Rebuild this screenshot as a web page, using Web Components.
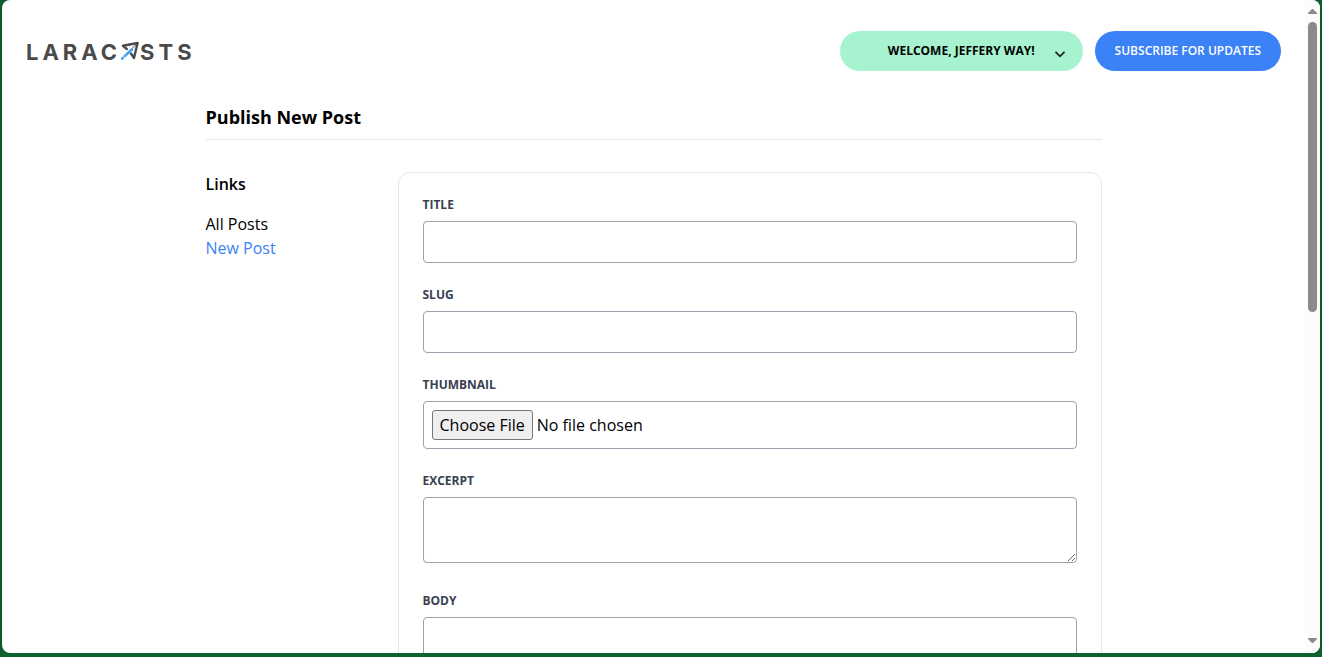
<!DOCTYPE html>
<html lang="en">
<head>
<meta charset="utf-8">
<title>Publish New Post</title>
<style>
  html { background: #0f6230; }
  body { margin: 0; font-family: "Open Sans", "Noto Sans", sans-serif; font-size: 16px; line-height: 24px; color: #000; }
</style>
</head>
<body>
<app-window>
  <site-header>
    <site-logo slot="logo"></site-logo>
    <user-menu>WELCOME, JEFFERY WAY!</user-menu>
    <pill-link href="#newsletter">SUBSCRIBE FOR UPDATES</pill-link>
  </site-header>
  <post-settings heading="Publish New Post">
    <side-nav slot="aside" heading="Links">
      <nav-item href="#posts">All Posts</nav-item>
      <nav-item href="#create" active>New Post</nav-item>
    </side-nav>
    <form-field name="title" label="TITLE" type="text"></form-field>
    <form-field name="slug" label="SLUG" type="text"></form-field>
    <form-field name="thumbnail" label="THUMBNAIL" type="file"></form-field>
    <form-field name="excerpt" label="EXCERPT" type="textarea"></form-field>
    <form-field name="body" label="BODY" type="textarea"></form-field>
  </post-settings>
</app-window>

<script>
const define = (name, render) => customElements.define(name, class extends HTMLElement {
  connectedCallback() {
    if (this.shadowRoot) return;
    const t = document.createElement('template');
    t.innerHTML = '<style>*{box-sizing:border-box}</style>' + render(this);
    this.attachShadow({ mode: 'open' }).append(t.content.cloneNode(true));
  }
});

define('app-window', () => `
  <style>
    :host { display: flex; box-sizing: border-box; height: calc(100vh - 4px); margin: 0 2px; background: #fff; border-radius: 8px; overflow: hidden; box-shadow: 0 0 3px #063d1c; }
    .page { flex: 1; min-width: 0; overflow: hidden; padding: 31px 24px 0; }
  </style>
  <div class="page"><slot></slot></div>
  <scroll-rail></scroll-rail>`);

define('scroll-rail', () => `
  <style>
    :host { display: flex; flex-direction: column; align-items: center; width: 15px; background: #fcfcfc; }
    svg { display: block; width: 9px; height: 22px; fill: #8b8b8b; }
    .track { flex: 1; width: 9px; }
    .thumb { height: 47.6%; background: #8b8b8b; border-radius: 5px; }
  </style>
  <svg viewBox="0 0 9 22" aria-hidden="true"><path d="M4 9h1l4 4v1H0v-1z"/></svg>
  <div class="track"><div class="thumb"></div></div>
  <svg viewBox="0 0 9 22" aria-hidden="true"><path d="M0 7h9v1l-4 4H4L0 8z"/></svg>`);

define('site-header', () => `
  <style>
    :host { display: flex; justify-content: space-between; align-items: center; }
    .actions { display: flex; gap: 12px; }
  </style>
  <slot name="logo"></slot>
  <div class="actions"><slot></slot></div>`);

define('site-logo', () => `
  <style>
    :host { display: block; padding-top: 2px; }
    a { display: flex; align-items: center; color: #4a4a4a; text-decoration: none; font: 700 22px/24px Inter, sans-serif; letter-spacing: 4px; }
    svg { display: block; width: 19px; height: 20px; overflow: visible; }
  </style>
  <a href="#home" aria-label="Laracasts home"><span>LARAC</span><svg viewBox="1 2 19 20" aria-hidden="true">
    <path d="M6.8 9 3 5.8 17.6 3 14 18 11 13.6" fill="none" stroke="#4a4a4a" stroke-width="2.4" stroke-linejoin="round" stroke-linecap="round"/>
    <path d="M17.4 3.2 11.5 9" stroke="#4a4a4a" stroke-width="1"/>
    <path d="M11.8 9.4 6.8 14.2M4.9 16l.3-.3M2.2 18.6l.5-.5" stroke="#4ba3f5" stroke-width="2.8" stroke-linecap="round"/>
  </svg><span>STS</span></a>`);

define('user-menu', () => `
  <style>
    :host { display: block; }
    button { position: relative; display: block; border: 0; margin: 0; padding: 12px 48px; border-radius: 20px; background: #a7f3d0; color: #000; font: 700 12px/16px "Open Sans", sans-serif; }
    svg { position: absolute; right: 12px; top: 12px; width: 22px; height: 22px; }
  </style>
  <button type="button" aria-haspopup="true"><slot></slot><svg viewBox="0 0 22 22" fill="none" aria-hidden="true"><path d="M6.5 8.8 11 13.3l4.5-4.5" stroke="#222" stroke-width="1.8"/></svg></button>`);

define('pill-link', el => `
  <style>
    :host { display: block; }
    a { display: block; padding: 12px 20px; border-radius: 20px; background: #3b82f6; color: #fff; font-size: 12px; line-height: 16px; font-weight: 600; text-decoration: none; }
  </style>
  <a href="${el.getAttribute('href')}"><slot></slot></a>`);

define('post-settings', el => `
  <style>
    :host { display: block; max-width: 896px; margin: 32px auto 0; }
    h1 { margin: 0 0 32px; padding-bottom: 8px; border-bottom: 1px solid #e5e7eb; font-size: 18px; line-height: 28px; font-weight: 700; }
    .columns { display: flex; }
    aside { flex: none; width: 192px; }
    main { flex: 1; min-width: 0; padding: 24px; border: 1px solid #e5e7eb; border-radius: 12px; }
    form { display: flex; flex-direction: column; gap: 24px; }
  </style>
  <h1>${el.getAttribute('heading')}</h1>
  <div class="columns">
    <aside><slot name="aside"></slot></aside>
    <main><form><slot></slot></form></main>
  </div>`);

define('side-nav', el => `
  <style>
    :host { display: block; }
    h4 { margin: 0 0 16px; font-size: 16px; line-height: 24px; font-weight: 600; }
  </style>
  <h4>${el.getAttribute('heading')}</h4>
  <nav><slot></slot></nav>`);

define('nav-item', el => `
  <style>
    :host { display: block; }
    a { color: #000; text-decoration: none; }
    :host([active]) a { color: #3b82f6; }
  </style>
  <a href="${el.getAttribute('href')}"><slot></slot></a>`);

define('form-field', el => {
  const name = el.getAttribute('name'), type = el.getAttribute('type');
  const control = type === 'textarea'
    ? `<textarea id="${name}" name="${name}" rows="2"></textarea>`
    : `<input id="${name}" name="${name}" type="${type}">`;
  return `
  <style>
    :host { display: block; }
    label { display: block; margin-bottom: 8px; color: #374151; font-size: 12px; line-height: 16px; font-weight: 700; }
    input, textarea { width: 100%; margin: 0; padding: 8px; border: 1px solid #9ca3af; border-radius: 4px; background: #fff; color: #000; font: inherit; }
    input { display: block; }
    input[type=text] { height: 42px; }
    input[type=file] { height: 48px; }
    input::file-selector-button { margin: 0 4px 0 0; padding: 2px 7px; border: 1px solid #767676; border-radius: 3px; background: #efefef; color: #000; font: inherit; }
    textarea { display: inline-block; resize: vertical; }
  </style>
  <label for="${name}">${el.getAttribute('label')}</label>
  ${control}`;
});
</script>
</body>
</html>
